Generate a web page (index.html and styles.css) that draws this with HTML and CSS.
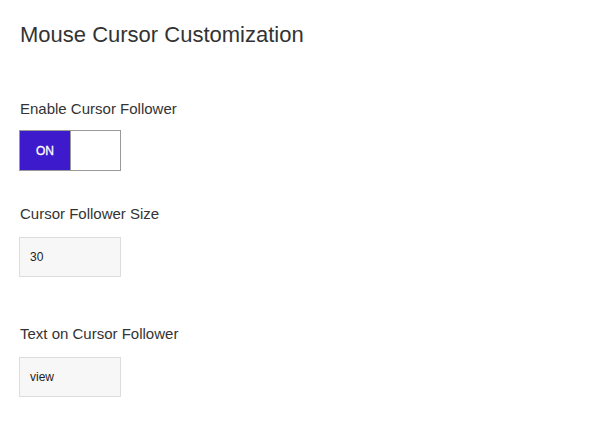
FILE: index.html
```html
<!DOCTYPE html>
<html>
<head>
<meta charset="utf-8">
<link rel="stylesheet" href="styles.css">
</head>
<body>
<div class="page">
  <h1 class="title">Mouse Cursor Customization</h1>
  <div class="field field-toggle">
    <div class="label">Enable Cursor Follower</div>
    <div class="toggle">
      <span class="toggle-on">ON</span>
      <span class="toggle-off"></span>
    </div>
  </div>
  <div class="field field-size">
    <div class="label">Cursor Follower Size</div>
    <div class="input">30</div>
  </div>
  <div class="field field-text">
    <div class="label">Text on Cursor Follower</div>
    <div class="input">view</div>
  </div>
</div>
</body>
</html>
```
FILE: styles.css
```css
* { box-sizing: border-box; }
html, body { margin: 0; padding: 0; background: #fff; }
body {
  font-family: "Liberation Sans", Arial, sans-serif;
  color: #333;
}
.page {
  padding: 22px 19px 0 19px;
  display: flex;
  flex-direction: column;
}
.title {
  margin: 0 0 0 1px;
  font-size: 22px;
  line-height: 26px;
  font-weight: normal;
  color: #333;
}
.field { display: flex; flex-direction: column; align-items: flex-start; }
.field-toggle { margin-top: 52px; }
.field-size { margin-top: 34px; }
.field-text { margin-top: 48px; }
.label {
  margin-left: 1px;
  font-size: 15px;
  line-height: 18px;
  color: #333;
}
.field-toggle .label { margin-bottom: 12px; }
.field-size .label, .field-text .label { margin-bottom: 14px; }
.toggle {
  display: flex;
  width: 102px;
  height: 41px;
  border: 1px solid #999;
}
.toggle-on {
  width: 51px;
  background: #3d1bcd;
  border-right: 1px solid #999;
  color: #fff;
  font-size: 12px;
  font-weight: normal;
  display: flex;
  align-items: center;
  justify-content: center;
  -webkit-text-stroke: 0.3px #fff;
}
.toggle-off { flex: 1; background: #fff; }
.input {
  width: 102px;
  height: 40px;
  border: 1px solid #ddd;
  background: #f7f7f7;
  font-size: 12px;
  color: #222;
  display: flex;
  align-items: center;
  padding-left: 10px;
}
```
